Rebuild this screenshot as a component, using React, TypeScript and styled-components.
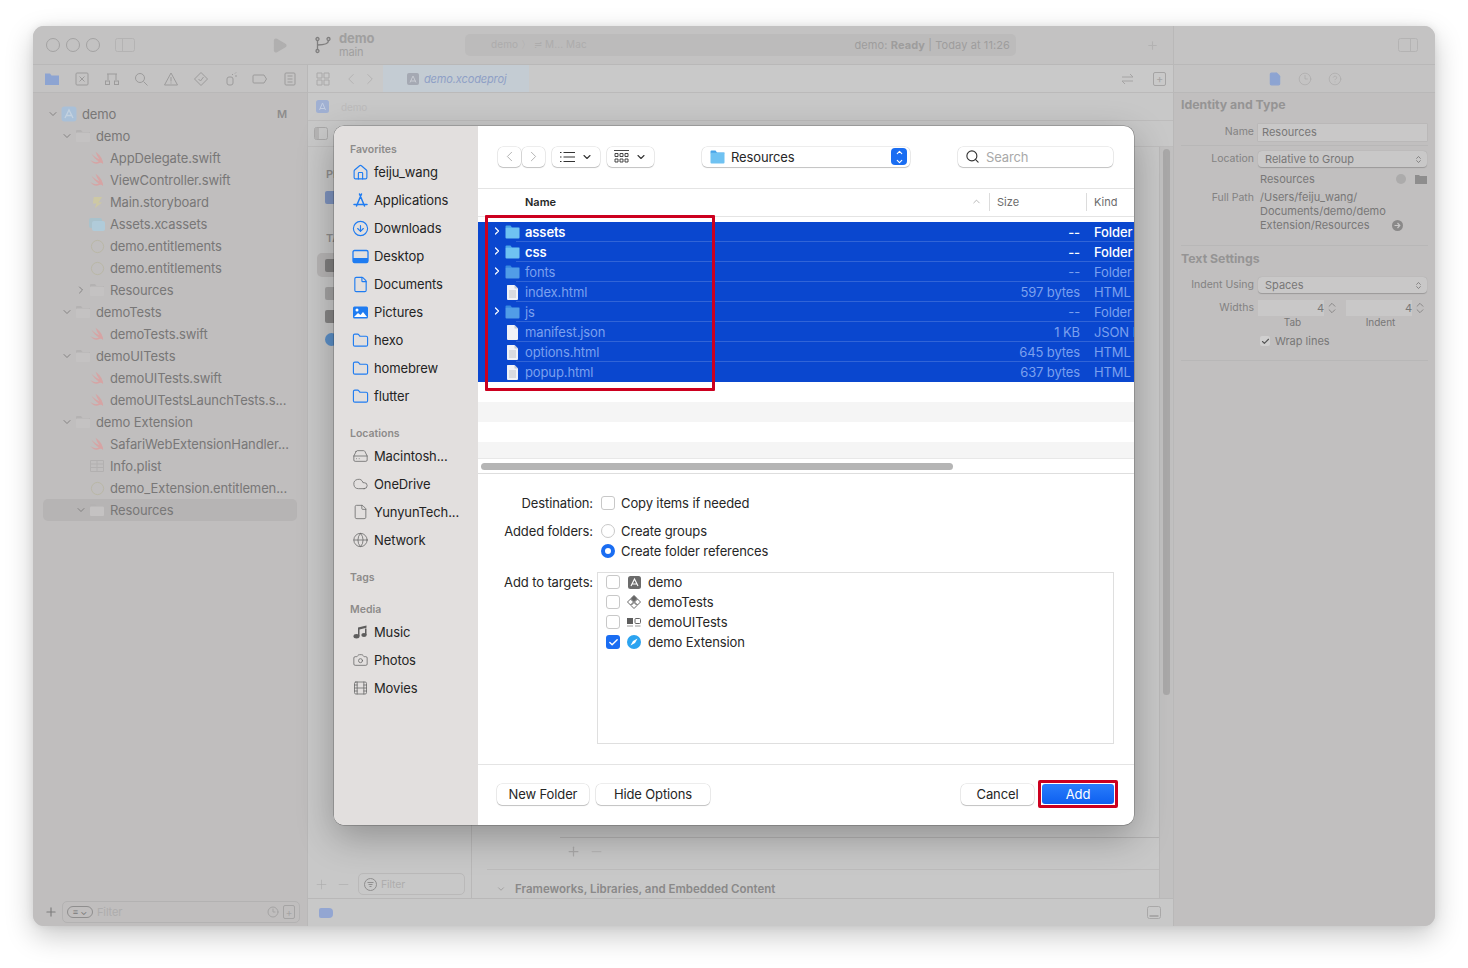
import React from "react";
import { createGlobalStyle, styled } from "styled-components";
import {
  Camera,
  Check,
  ChevronDown,
  ChevronLeft,
  ChevronRight,
  ChevronUp,
  ChevronsUpDown,
  CircleArrowDown,
  CircleHelp,
  Clock3,
  Cloud,
  File,
  Film,
  Folder,
  Globe,
  HardDrive,
  House,
  Minus,
  Play,
  Plus,
  Search,
} from "lucide-react";

const GlobalStyle = createGlobalStyle`
  html, body {
    margin: 0;
    background: #fff;
  }
  body {
    font-family: Inter, "Noto Sans", "Liberation Sans", sans-serif;
    font-size: 13px;
    letter-spacing: -0.12px;
    -webkit-font-smoothing: antialiased;
  }
  * {
    box-sizing: border-box;
  }
  svg {
    display: block;
    flex: none;
  }
`;

type TreeRow = {
  name: string;
  depth: number;
  arrow?: "open" | "closed";
  icon: "project" | "folder" | "swift" | "story" | "assets" | "plist" | "ent";
  selected?: boolean;
};

const tree: TreeRow[] = [
  { name: "demo", depth: 0, arrow: "open", icon: "project" },
  { name: "demo", depth: 1, arrow: "open", icon: "folder" },
  { name: "AppDelegate.swift", depth: 2, icon: "swift" },
  { name: "ViewController.swift", depth: 2, icon: "swift" },
  { name: "Main.storyboard", depth: 2, icon: "story" },
  { name: "Assets.xcassets", depth: 2, icon: "assets" },
  { name: "demo.entitlements", depth: 2, icon: "ent" },
  { name: "demo.entitlements", depth: 2, icon: "ent" },
  { name: "Resources", depth: 2, arrow: "closed", icon: "folder" },
  { name: "demoTests", depth: 1, arrow: "open", icon: "folder" },
  { name: "demoTests.swift", depth: 2, icon: "swift" },
  { name: "demoUITests", depth: 1, arrow: "open", icon: "folder" },
  { name: "demoUITests.swift", depth: 2, icon: "swift" },
  { name: "demoUITestsLaunchTests.s...", depth: 2, icon: "swift" },
  { name: "demo Extension", depth: 1, arrow: "open", icon: "folder" },
  { name: "SafariWebExtensionHandler...", depth: 2, icon: "swift" },
  { name: "Info.plist", depth: 2, icon: "plist" },
  { name: "demo_Extension.entitlemen...", depth: 2, icon: "ent" },
  { name: "Resources", depth: 2, arrow: "open", icon: "folder", selected: true },
];

const files = [
  { name: "assets", size: "--", kind: "Folder", folder: true, active: true },
  { name: "css", size: "--", kind: "Folder", folder: true, active: true },
  { name: "fonts", size: "--", kind: "Folder", folder: true },
  { name: "index.html", size: "597 bytes", kind: "HTML" },
  { name: "js", size: "--", kind: "Folder", folder: true },
  { name: "manifest.json", size: "1 KB", kind: "JSON File" },
  { name: "options.html", size: "645 bytes", kind: "HTML" },
  { name: "popup.html", size: "637 bytes", kind: "HTML" },
];

const SwiftIcon = ({ color = "#d6a4a4" }: { color?: string }) => (
  <svg width="17" height="17" viewBox="1 2 14 13">
    <path
      d="M2 9.500C4 11.500 7 12 9 11 7 9.500 4.500 7 3 4.500 5 6.500 8 8.500 9.500 9 8 7 7 5 6.500 3c2.500 2 5 4.500 5.500 7 .5 1 .8 2 .5 3-.8-1-1.800-1.200-3-.8C7 13.500 4 12.500 2 9.500Z"
      fill={color}
    />
  </svg>
);

const FolderFill = ({ color = "#c4c2c2", tab = "#b4b2b2" }: { color?: string; tab?: string }) => (
  <svg width="16" height="14" viewBox="0 0 16 14">
    <path d="M1 3V2a1 1 0 0 1 1-1h4l1.500 2H15v1H1Z" fill={tab} />
    <rect x="1" y="3.500" width="14" height="9.500" rx="1" fill={color} />
  </svg>
);

const TreeIcon = ({ kind }: { kind: TreeRow["icon"] }) => {
  switch (kind) {
    case "project":
      return (
        <svg width="16" height="16" viewBox="0 0 16 16">
          <rect x=".5" y=".5" width="15" height="15" rx="3" fill="#a9c0d8" />
          <path d="M4 12 8 4l4 8M5 9.500h6" stroke="#c4d2e0" strokeWidth="1.300" fill="none" />
        </svg>
      );
    case "folder":
      return <FolderFill />;
    case "swift":
      return <SwiftIcon />;
    case "story":
      return (
        <svg width="15" height="15" viewBox="0 0 16 16">
          <path d="M4 2h9L9 8h4L5 14l2-5H3l1-7Z" fill="#cdc8a4" />
        </svg>
      );
    case "assets":
      return (
        <svg width="18" height="15" viewBox="0 0 18 15">
          <rect x="1" y="1" width="13" height="10" rx="2" fill="#a9c2cc" />
          <rect x="4" y="4" width="13" height="10" rx="2" fill="#b0cbd9" />
        </svg>
      );
    case "plist":
      return (
        <svg width="16" height="14" viewBox="0 0 16 14">
          <path d="M1.500 1.500h13v11h-13ZM1.500 5h13M1.500 8.500h13M8 1.500v11" stroke="#b2b0b0" fill="none" />
        </svg>
      );
    default:
      return (
        <svg width="15" height="15" viewBox="0 0 16 16">
          <circle cx="8" cy="8" r="6.500" stroke="#b9b6a4" fill="none" />
        </svg>
      );
  }
};

const NavIcon = ({ index }: { index: number }) => {
  const s = { stroke: "#9c9b9b", fill: "none", strokeWidth: 1 };
  const shapes = [
    <path d="M1 2.500h5l1.500 2H15V14H1Z" fill="#8da4d2" />,
    <g {...s}><rect x="2" y="2" width="12" height="12" rx="1" /><path d="m5.500 5.500 5 5m0-5-5 5" /></g>,
    <g {...s}><path d="M3 3h10M4 3v6M12 3v6" /><rect x="1.500" y="10" width="4" height="3.500" /><rect x="10.500" y="10" width="4" height="3.500" /></g>,
    <g {...s}><circle cx="7" cy="7" r="4.500" /><path d="m10.500 10.500 4 4" /></g>,
    <g {...s}><path d="M8 2 14.500 14h-13Z" /><path d="M8 6v4.500M8 11.500v1" /></g>,
    <g {...s}><path d="M8 1.500 14.500 8 8 14.500 1.500 8Z" /><path d="m5.500 8 2 2 3-4" /></g>,
    <g {...s}><rect x="4" y="6" width="6" height="8" rx="2" /><path d="M9 3.500h1M12 2.500l1-1M12 5h2" /></g>,
    <g {...s}><path d="M2 4h10l2.500 4-2.500 4H2a1 1 0 0 1-1-1V5a1 1 0 0 1 1-1Z" /></g>,
    <g {...s}><rect x="3" y="2" width="10" height="12" rx="1" /><path d="M5.500 5h5M5.500 8h5M5.500 11h5" /></g>,
  ];
  return (
    <svg width="16" height="16" viewBox="0 0 16 16">
      {shapes[index]}
    </svg>
  );
};

const PanelIcon = ({ side }: { side: "left" | "right" }) => (
  <svg width="20" height="16" viewBox="0 0 20 16" fill="none" stroke="#b4b3b3">
    <rect x=".5" y="1.500" width="19" height="13" rx="2" />
    {side === "left" && <path d="M7.500 1.500v13" />}
    {side === "right" && <path d="M12.500 1.500v13" />}
  </svg>
);

const SmallPanel = ({ side }: { side: "left" | "bottom" }) => (
  <svg width="14" height="13" viewBox="0 0 14 13" stroke="#a9a8a8" fill="none">
    <rect x=".5" y=".5" width="13" height="12" rx="2" />
    {side === "left" && <path d="M1 1h4v11H1Z" fill="#b5b4b4" stroke="none" />}
    {side === "bottom" && <path d="M2.500 10h9" strokeWidth="2" />}
  </svg>
);

const ArrowDot = () => (
  <svg width="11" height="11" viewBox="0 0 11 11">
    <circle cx="5.500" cy="5.500" r="5.500" fill="#8a8989" />
    <path d="M2.500 5.500h5M5.500 3l2.300 2.500L5.500 8" stroke="#c9c8c8" strokeWidth="1.200" fill="none" />
  </svg>
);

const DesktopIcon = () => (
  <svg width="17" height="15" viewBox="0 0 17 15" fill="none">
    <rect x="1" y="1.500" width="15" height="12" rx="1.500" stroke="#1f7cf1" strokeWidth="1.300" />
    <rect x="1" y="9" width="15" height="4.500" fill="#1f7cf1" />
  </svg>
);

const PicturesIcon = () => (
  <svg width="17" height="15" viewBox="0 0 17 15">
    <rect x="1" y="1.500" width="15" height="12" rx="1.500" fill="#1f7cf1" />
    <circle cx="5" cy="5" r="1.500" fill="#fff" />
    <path d="m2 12 4-4 2.500 2 2.500-3 4 5Z" fill="#fff" />
  </svg>
);

const AppsIcon = () => (
  <svg width="17" height="16" viewBox="0 0 17 16" fill="none" stroke="#1f7cf1" strokeWidth="1.500" strokeLinecap="round">
    <path d="M2 12.500h13M9.500 2 4.500 14M7.500 2l5 12" />
  </svg>
);

const MusicIcon = () => (
  <svg width="16" height="16" viewBox="0 0 16 16">
    <path d="M5.500 3.500 14 1.500v2.300l-7 1.700V12h-1.500ZM12.500 4.500H14V11h-1.500Z" fill="#5e5d5d" />
    <ellipse cx="4" cy="12.300" rx="3" ry="2.200" fill="#5e5d5d" />
    <ellipse cx="11.500" cy="11" rx="2.700" ry="2" fill="#5e5d5d" />
  </svg>
);

const BlueFolder = ({ dim }: { dim?: boolean }) => (
  <svg width="15" height="14" viewBox="0 0 15 14" opacity={dim ? 0.7 : 1}>
    <path d="M.5 3V1.500a1 1 0 0 1 1-1h4l1.500 2h7.500v1H.5Z" fill="#4aa5e8" />
    <rect x=".5" y="2.800" width="14" height="10.700" rx="1" fill="#6fc2f2" />
  </svg>
);

const DocIcon = ({ lined }: { lined?: boolean }) => (
  <svg width="13" height="15" viewBox="0 0 13 15">
    <path d="M1.500 0h7L12 3.500V14a1 1 0 0 1-1 1H2a1 1 0 0 1-1-1V.5a.5.5 0 0 1 .5-.5Z" fill="#f0f2f7" />
    <path d="M8.500 0v3.500H12Z" fill="#c3c9d8" />
    {lined && <path d="M3 6h7M3 8h7M3 10h7M3 12h7" stroke="#c2c4ca" strokeWidth="1.100" />}
  </svg>
);

const sideBlue = { size: 17, color: "#1f7cf1", strokeWidth: 1.600 };
const sideGray = { size: 16, color: "#6a6969", strokeWidth: 1.200 };

const Sidebar: React.FC = () => (
  <DialogSide>
    <SideHead>Favorites</SideHead>
    <SideItem><House {...sideBlue} /><span>feiju_wang</span></SideItem>
    <SideItem><AppsIcon /><span>Applications</span></SideItem>
    <SideItem><CircleArrowDown {...sideBlue} /><span>Downloads</span></SideItem>
    <SideItem><DesktopIcon /><span>Desktop</span></SideItem>
    <SideItem><File {...sideBlue} /><span>Documents</span></SideItem>
    <SideItem><PicturesIcon /><span>Pictures</span></SideItem>
    <SideItem><Folder {...sideBlue} /><span>hexo</span></SideItem>
    <SideItem><Folder {...sideBlue} /><span>homebrew</span></SideItem>
    <SideItem><Folder {...sideBlue} /><span>flutter</span></SideItem>
    <SideHead $gap={17}>Locations</SideHead>
    <SideItem><HardDrive {...sideGray} /><span>Macintosh...</span></SideItem>
    <SideItem><Cloud {...sideGray} /><span>OneDrive</span></SideItem>
    <SideItem><File {...sideGray} /><span>YunyunTech...</span></SideItem>
    <SideItem><Globe {...sideGray} /><span>Network</span></SideItem>
    <SideHead $gap={17}>Tags</SideHead>
    <SideHead $gap={18}>Media</SideHead>
    <SideItem><MusicIcon /><span>Music</span></SideItem>
    <SideItem><Camera {...sideGray} /><span>Photos</span></SideItem>
    <SideItem><Film {...sideGray} /><span>Movies</span></SideItem>
  </DialogSide>
);

const OpenDialog: React.FC = () => (
  <Dialog>
    <Sidebar />
    <DialogMain>
      <Toolbar>
        <NavPair>
          <NavButton><ChevronLeft size={17} color="#a8a8a8" strokeWidth={1.200} /></NavButton>
          <NavButton><ChevronRight size={17} color="#a8a8a8" strokeWidth={1.200} /></NavButton>
        </NavPair>
        <ViewButton $width={48}>
          <svg width="15" height="12" viewBox="0 0 15 12" stroke="#333" strokeWidth="1.100">
            <path d="M3.500 1.500H15M3.500 6H15M3.500 10.500H15M0 1.500h1.500M0 6h1.500M0 10.500h1.500" />
          </svg>
          <ChevronDown size={12} color="#333" strokeWidth={2.200} />
        </ViewButton>
        <ViewButton $width={47}>
          <svg width="15" height="14" viewBox="0 0 15 14" fill="none" stroke="#333" strokeWidth=".9">
            <path d="M0 .5h15" />
            <path d="M1 3.500h3v3H1ZM6 3.500h3v3H6ZM11 3.500h3v3h-3ZM1 9h3v3H1ZM6 9h3v3H6ZM11 9h3v3h-3Z" />
          </svg>
          <ChevronDown size={12} color="#333" strokeWidth={2.200} />
        </ViewButton>
        <PathPopup>
          <BlueFolder />
          <PopupLabel>Resources</PopupLabel>
          <PopupStepper>
            <ChevronUp size={9} color="#fff" strokeWidth={3} />
            <ChevronDown size={9} color="#fff" strokeWidth={3} />
          </PopupStepper>
        </PathPopup>
        <SearchBox>
          <Search size={15} color="#333" strokeWidth={1.800} />
          <span>Search</span>
        </SearchBox>
      </Toolbar>

      <ColumnHeader>
        <NameHead>Name</NameHead>
        <ChevronUp size={11} color="#999" strokeWidth={1.500} />
        <SizeHead>Size</SizeHead>
        <KindHead>Kind</KindHead>
      </ColumnHeader>

      <FileList>
        {files.map((f) => (
          <FileRow key={f.name} $active={f.active}>
            <Caret>
              {f.folder && <ChevronRight size={12} color="#fff" strokeWidth={2.400} />}
            </Caret>
            <FileIcon>
              {f.folder ? <BlueFolder dim={!f.active} /> : <DocIcon lined={f.kind === "HTML"} />}
            </FileIcon>
            <FileName $active={f.active}>{f.name}</FileName>
            <FileSize>{f.size}</FileSize>
            <FileKind>{f.kind}</FileKind>
          </FileRow>
        ))}
      </FileList>
      <Stripe />
      <Stripe $gray />
      <Stripe />
      <Stripe $gray $height={16} />
      <HScroll>
        <HThumb />
      </HScroll>

      <Options>
        <OptionRow>
          <OptionLabel>Destination:</OptionLabel>
          <OptionValue><CheckBox /><span>Copy items if needed</span></OptionValue>
        </OptionRow>
        <OptionRow $gap={8}>
          <OptionLabel>Added folders:</OptionLabel>
          <OptionValue><Radio /><span>Create groups</span></OptionValue>
          <OptionValue><Radio $on /><span>Create folder references</span></OptionValue>
        </OptionRow>
        <OptionRow $gap={11}>
          <OptionLabel>Add to targets:</OptionLabel>
          <TargetBox>
            <TargetRow>
              <CheckBox />
              <TargetIcon>
                <svg width="13" height="13" viewBox="0 0 13 13">
                  <rect width="13" height="13" rx="2.500" fill="#6b6b6b" />
                  <path d="M3 10 6.500 3 10 10M3.500 8h6" stroke="#fff" strokeWidth="1.100" fill="none" />
                </svg>
              </TargetIcon>
              <span>demo</span>
            </TargetRow>
            <TargetRow>
              <CheckBox />
              <TargetIcon>
                <svg width="14" height="14" viewBox="0 0 14 14" fill="none" stroke="#666">
                  <path d="M7 .5 10 3.500 7 6.500 4 3.500Z" fill="#666" />
                  <path d="M3.500 4 .5 7l3 3 3-3ZM10.500 4l3 3-3 3-3-3ZM7 7.500l3 3-3 3-3-3Z" />
                </svg>
              </TargetIcon>
              <span>demoTests</span>
            </TargetRow>
            <TargetRow>
              <CheckBox />
              <TargetIcon>
                <svg width="14" height="12" viewBox="0 0 14 12">
                  <rect y="2" width="6" height="6" fill="#5d5d5d" />
                  <rect x="8" y="2.500" width="5.500" height="5" rx="1" fill="none" stroke="#666" />
                  <path d="M0 10h6M8 10h5.500" stroke="#999" />
                </svg>
              </TargetIcon>
              <span>demoUITests</span>
            </TargetRow>
            <TargetRow>
              <CheckBox $on><Check size={11} color="#fff" strokeWidth={3} /></CheckBox>
              <TargetIcon>
                <svg width="14" height="14" viewBox="0 0 14 14">
                  <circle cx="7" cy="7" r="7" fill="#2ba3f0" />
                  <path d="M10.500 3.500 8 8 3.500 10.500 6 6Z" fill="#fff" />
                </svg>
              </TargetIcon>
              <span>demo Extension</span>
            </TargetRow>
          </TargetBox>
        </OptionRow>
      </Options>

      <Footer>
        <PushButton $width={92}>New Folder</PushButton>
        <PushButton $width={114}>Hide Options</PushButton>
        <FooterSpacer />
        <PushButton $width={73}>Cancel</PushButton>
        <AddFrame>
          <AddButton>Add</AddButton>
        </AddFrame>
      </Footer>
      <RedBox />
    </DialogMain>
  </Dialog>
);

export default function App() {
  return (
    <Page>
      <GlobalStyle />
      <Window>
        <TopBar>
          <Lights>
            <Light />
            <Light />
            <Light />
          </Lights>
          <PanelIcon side="left" />
          <RunButton><Play size={17} color="#b0afaf" fill="#b0afaf" /></RunButton>
          <BranchMark>
            <svg width="16" height="18" viewBox="0 0 16 18" fill="none" stroke="#7f7e7e" strokeWidth="1.300">
              <circle cx="2.500" cy="3" r="1.500" />
              <circle cx="2.500" cy="15" r="1.500" />
              <circle cx="13.500" cy="3" r="1.500" />
              <path d="M2.500 4.500v9M13.500 4.500c0 3-4 4.500-11 4.500" />
            </svg>
          </BranchMark>
          <Scheme>
            <SchemeName>demo</SchemeName>
            <SchemeBranch>main</SchemeBranch>
          </Scheme>
          <Activity>
            <ActivityCrumbs>demo 〉 ≓ M... Mac</ActivityCrumbs>
            <ActivityStatus>demo: <b>Ready</b> | Today at 11:26</ActivityStatus>
          </Activity>
          <AddTab><Plus size={13} color="#b3b2b2" /></AddTab>
        </TopBar>
        <InspectorTop>
          <PanelIcon side="right" />
        </InspectorTop>

        <Navigator>
          <NavTabs>
            {Array.from({ length: 9 }).map((_, i) => (
              <NavIcon key={i} index={i} />
            ))}
          </NavTabs>
          <Tree>
            {tree.map((r, i) => (
              <TreeItem key={i} $depth={r.depth} $selected={r.selected}>
                <TreeArrow>
                  {r.arrow === "open" && <ChevronDown size={12} color="#7d7c7c" strokeWidth={1.800} />}
                  {r.arrow === "closed" && <ChevronRight size={12} color="#7d7c7c" strokeWidth={1.800} />}
                </TreeArrow>
                <TreeIconSlot><TreeIcon kind={r.icon} /></TreeIconSlot>
                <span>{r.name}</span>
                {i === 0 && <TreeBadge>M</TreeBadge>}
              </TreeItem>
            ))}
          </Tree>
          <NavFilter>
            <Plus size={14} color="#7d7c7c" />
            <FilterField>
              <FilterPill>≡ ⌄</FilterPill>
              <span>Filter</span>
              <FilterClock><Clock3 size={12} color="#a5a4a4" /></FilterClock>
              <FilterSquare>+</FilterSquare>
            </FilterField>
          </NavFilter>
        </Navigator>

        <Editor>
          <TabStrip>
            <TabTools>
              <svg width="14" height="14" viewBox="0 0 14 14" fill="none" stroke="#a9a8a8">
                <path d="M1 1h5v5H1ZM8 1h5v5H8ZM1 8h5v5H1ZM8 8h5v5H8Z" />
              </svg>
              <ToolChevrons>
                <ChevronLeft size={18} color="#b3b2b2" strokeWidth={1.300} />
                <ChevronRight size={18} color="#b3b2b2" strokeWidth={1.300} />
              </ToolChevrons>
            </TabTools>
            <ActiveTab>
              <svg width="12" height="12" viewBox="0 0 12 12">
                <rect width="12" height="12" rx="2" fill="#a5a9b3" />
                <path d="M3 9.500 6 3l3 6.500M3.500 8h5" stroke="#c8cbd2" fill="none" />
              </svg>
              demo.xcodeproj
            </ActiveTab>
            <TabRight>
              <svg width="13" height="12" viewBox="0 0 13 12" fill="none" stroke="#a5a4a4">
                <path d="M1 4h11L9 1M12 8H1l3 3" />
              </svg>
              <PanelPlus>+</PanelPlus>
            </TabRight>
          </TabStrip>
          <Crumbs>
            <svg width="13" height="13" viewBox="0 0 13 13">
              <rect width="13" height="13" rx="2.500" fill="#a0b0d2" />
              <path d="M3.500 10 6.500 3l3 7M4 8.500h5" stroke="#c2cde2" fill="none" />
            </svg>
            <span>demo</span>
          </Crumbs>
          <SubBar>
            <SmallPanel side="left" />
          </SubBar>
          <EditorBody>
            <TargetsPane>
              <PaneHead>PROJECT</PaneHead>
              <PaneIcon $color="#7d92bd" />
              <PaneHead $top={27}>TARGETS</PaneHead>
              <PaneSelected>
                <PaneIcon $color="#7f7e7e" $flat />
              </PaneSelected>
              <PaneIcon $color="#a3a2a2" />
              <PaneIcon $color="#868585" />
              <PaneIcon $color="#5b8fc7" $round />
              <PaneFilter>
                <Plus size={15} color="#acabab" strokeWidth={1} />
                <Minus size={15} color="#acabab" strokeWidth={1} />
                <PaneFilterField>
                  <svg width="13" height="13" viewBox="0 0 13 13" fill="none" stroke="#8f8e8e">
                    <circle cx="6.500" cy="6.500" r="6" />
                    <path d="M3.500 4.500h6M4.500 6.500h4M5.500 8.500h2" />
                  </svg>
                  Filter
                </PaneFilterField>
              </PaneFilter>
            </TargetsPane>
            <SettingsPane>
              <TableTail>
                <Plus size={15} color="#aaa9a9" />
                <Minus size={15} color="#b8b7b7" />
              </TableTail>
              <FrameworkRow>
                <ChevronDown size={10} color="#9b9a9a" />
                <span>Frameworks, Libraries, and Embedded Content</span>
              </FrameworkRow>
            </SettingsPane>
            <ScrollRail>
              <RailThumb />
            </ScrollRail>
          </EditorBody>
          <StatusBar>
            <StatusTag />
            <SmallPanel side="bottom" />
          </StatusBar>
        </Editor>

        <Inspector>
          <InspectorTabs>
            <File size={14} color="#8da4d2" fill="#8da4d2" />
            <Clock3 size={14} color="#a7a6a6" strokeWidth={1} />
            <CircleHelp size={14} color="#a7a6a6" strokeWidth={1} />
          </InspectorTabs>
          <SectionTitle>Identity and Type</SectionTitle>
          <FormRow $top={11} $rule $pad={4}>
            <FormLabel>Name</FormLabel>
            <NameField>Resources</NameField>
          </FormRow>
          <FormRow $top={5}>
            <FormLabel>Location</FormLabel>
            <SelectField>Relative to Group<ChevronsUpDown size={9} color="#6f6e6e" strokeWidth={2} /></SelectField>
          </FormRow>
          <FormRow $pad={4}>
            <span />
            <PathLine $actions>
              Resources
              <PathActions>
                <RoundDot />
                <svg width="12" height="10" viewBox="0 0 12 10"><path d="M0 1h4l1 1h7v8H0Z" fill="#8e8d8d" /></svg>
              </PathActions>
            </PathLine>
          </FormRow>
          <FormRow $rule $pad={13}>
            <FormLabel>Full Path</FormLabel>
            <PathLine>
              /Users/feiju_wang/<br />
              Documents/demo/demo<br />
              <ArrowLine>Extension/Resources<ArrowDot /></ArrowLine>
            </PathLine>
          </FormRow>
          <SectionTitle $top={5}>Text Settings</SectionTitle>
          <FormRow $top={10}>
            <FormLabel>Indent Using</FormLabel>
            <SelectField>Spaces<ChevronsUpDown size={9} color="#6f6e6e" strokeWidth={2} /></SelectField>
          </FormRow>
          <FormRow $top={2}>
            <FormLabel>Widths</FormLabel>
            <Steppers>
              <StepCell>
                <StepField>4</StepField>
                <ChevronsUpDown size={14} color="#727171" strokeWidth={1.200} />
                <StepCaption>Tab</StepCaption>
              </StepCell>
              <StepCell>
                <StepField>4</StepField>
                <ChevronsUpDown size={14} color="#727171" strokeWidth={1.200} />
                <StepCaption>Indent</StepCaption>
              </StepCell>
            </Steppers>
          </FormRow>
          <FormRow $rule $pad={12}>
            <span />
            <WrapLine>
              <WrapBox><Check size={9} color="#555" strokeWidth={3} /></WrapBox>
              Wrap lines
            </WrapLine>
          </FormRow>
        </Inspector>

        <OpenDialog />
      </Window>
    </Page>
  );
}

const Page = styled.div`
  width: 1468px;
  height: 968px;
  padding: 26px 33px 42px;
  overflow: hidden;
  background: #fff;
`;

const Window = styled.div`
  position: relative;
  width: 1402px;
  height: 900px;
  display: grid;
  grid-template-columns: 274px 866px 262px;
  grid-template-rows: 39px 1fr;
  border-radius: 11px;
  background: #c6c5c5;
  box-shadow: 0 10px 28px rgba(0, 0, 0, 0.22), 0 0 8px rgba(0, 0, 0, 0.08);
`;

const TopBar = styled.div`
  grid-column: 1 / 3;
  display: flex;
  align-items: center;
  padding-left: 13px;
  background: #c3c2c2;
  border-top-left-radius: 11px;
  border-bottom: 1px solid #b9b8b8;
`;

const Lights = styled.div`
  display: flex;
  gap: 6px;
  margin-right: 15px;
`;

const Light = styled.span`
  width: 14px;
  height: 14px;
  border-radius: 50%;
  border: 1px solid #a3a2a2;
`;

const RunButton = styled.span`
  margin-left: 136px;
`;

const BranchMark = styled.span`
  margin-left: 27px;
`;

const AddTab = styled.span`
  margin-left: 130px;
`;

const Scheme = styled.div`
  margin-left: 8px;
  width: 126px;
  color: #a09f9f;
`;

const SchemeName = styled.div`
  font-size: 13px;
  font-weight: 700;
  line-height: 15px;
`;

const SchemeBranch = styled.div`
  font-size: 11px;
  line-height: 13px;
`;

const Activity = styled.div`
  width: 551px;
  height: 22px;
  display: flex;
  align-items: center;
  justify-content: space-between;
  padding: 0 6px 0 26px;
  border-radius: 5px;
  background: #bcbbbb;
  font-size: 11px;
  letter-spacing: 0.1px;
  color: #a5a4a4;
`;

const ActivityCrumbs = styled.span`
  font-size: 10px;
  color: #adacac;
`;

const ActivityStatus = styled.span`
  color: #9e9d9d;
`;

const InspectorTop = styled.div`
  display: flex;
  align-items: center;
  justify-content: flex-end;
  padding-right: 17px;
  background: #c4c3c3;
  border-top-right-radius: 11px;
  border-left: 1px solid #b9b8b8;
  border-bottom: 1px solid #b9b8b8;
`;

const Navigator = styled.div`
  display: flex;
  flex-direction: column;
  min-height: 0;
  background: #c0bebe;
  border-bottom-left-radius: 11px;
`;

const NavTabs = styled.div`
  height: 28px;
  display: flex;
  align-items: center;
  justify-content: space-between;
  padding: 0 9px 0 11px;
  background: #c4c3c3;
  border-bottom: 1px solid #b9b8b8;
`;

const Tree = styled.div`
  flex: 1;
  padding-top: 10px;
  color: #787777;
`;

const TreeItem = styled.div<{ $depth: number; $selected?: boolean }>`
  height: 22px;
  margin: 0 10px;
  padding-left: ${(p) => 4 + p.$depth * 14}px;
  display: flex;
  align-items: center;
  border-radius: 5px;
  white-space: nowrap;
  background: ${(p) => (p.$selected ? "#b6b4b4" : "transparent")};
`;

const TreeArrow = styled.span`
  width: 12px;
  flex: none;
`;

const TreeIconSlot = styled.span`
  width: 16px;
  margin: 0 5px 0 2px;
  display: flex;
  justify-content: center;
  flex: none;
`;

const TreeBadge = styled.span`
  margin-left: auto;
  margin-right: 10px;
  font-size: 11px;
  font-weight: 600;
  color: #8d8c8c;
`;

const NavFilter = styled.div`
  height: 28px;
  display: flex;
  align-items: center;
  gap: 4px;
  padding: 0 7px 0 11px;
`;

const FilterField = styled.div`
  flex: 1;
  height: 22px;
  display: flex;
  align-items: center;
  gap: 4px;
  padding: 0 4px;
  border: 1px solid #b3b2b2;
  border-radius: 5px;
  font-size: 11px;
  color: #aeadad;
`;

const FilterClock = styled.span`
  margin-left: auto;
`;

const FilterPill = styled.span`
  width: 26px;
  height: 12px;
  border: 1px solid #8f8e8e;
  border-radius: 6px;
  font-size: 9px;
  line-height: 10px;
  text-align: center;
  color: #777;
`;

const FilterSquare = styled.span`
  width: 12px;
  height: 14px;
  border: 1px solid #a5a4a4;
  border-radius: 2px;
  font-size: 10px;
  line-height: 12px;
  text-align: center;
  color: #a5a4a4;
`;

const Editor = styled.div`
  display: flex;
  flex-direction: column;
  min-height: 0;
  background: #c8c8c8;
  border-left: 1px solid #b9b8b8;
`;

const TabStrip = styled.div`
  height: 28px;
  flex: none;
  display: flex;
  align-items: center;
  border-bottom: 1px solid #bbbaba;
  background: #c9c9c9;
`;

const TabTools = styled.div`
  width: 75px;
  display: flex;
  align-items: center;
  padding-left: 8px;
`;

const ToolChevrons = styled.span`
  display: flex;
  gap: 1px;
  margin-left: 12px;
`;

const ActiveTab = styled.div`
  width: 146px;
  height: 27px;
  display: flex;
  align-items: center;
  gap: 5px;
  padding-left: 24px;
  background: #c4ccd3;
  font-size: 11px;
  font-style: italic;
  color: #8fa0c6;
`;

const TabRight = styled.div`
  margin-left: auto;
  display: flex;
  align-items: center;
  gap: 19px;
  padding-right: 7px;
`;

const PanelPlus = styled.span`
  width: 13px;
  height: 14px;
  border: 1px solid #a5a4a4;
  border-radius: 2px;
  font-size: 11px;
  line-height: 12px;
  text-align: center;
  color: #a5a4a4;
`;

const Crumbs = styled.div`
  height: 28px;
  flex: none;
  display: flex;
  align-items: center;
  gap: 12px;
  padding-left: 8px;
  border-bottom: 1px solid #bdbcbc;
  font-size: 10px;
  color: #bcbbbb;
`;

const SubBar = styled.div`
  height: 26px;
  flex: none;
  display: flex;
  align-items: center;
  padding-left: 6px;
  border-bottom: 1px solid #bdbcbc;
`;

const EditorBody = styled.div`
  flex: 1;
  min-height: 0;
  display: flex;
`;

const TargetsPane = styled.div`
  width: 164px;
  flex: none;
  display: flex;
  flex-direction: column;
  padding-top: 20px;
  border-right: 1px solid #b9b8b8;
`;

const PaneHead = styled.div<{ $top?: number }>`
  margin: ${(p) => p.$top ?? 0}px 0 0 18px;
  font-size: 11px;
  font-weight: 600;
  color: #8e8d8d;
`;

const PaneIcon = styled.div<{ $color: string; $round?: boolean; $flat?: boolean }>`
  width: 13px;
  height: 13px;
  margin: ${(p) => (p.$flat ? "0" : "10px 0 0 17px")};
  border-radius: ${(p) => (p.$round ? "50%" : "2px")};
  background: ${(p) => p.$color};
`;

const PaneSelected = styled.div`
  width: 150px;
  height: 24px;
  margin: 8px 0 0 9px;
  padding-left: 8px;
  display: flex;
  align-items: center;
  border-radius: 5px;
  background: #b6b4b4;
`;

const PaneFilter = styled.div`
  margin-top: auto;
  height: 30px;
  margin-bottom: -1px;
  display: flex;
  align-items: center;
  gap: 7px;
  padding: 0 6px;
`;

const PaneFilterField = styled.div`
  flex: 1;
  height: 22px;
  display: flex;
  align-items: center;
  gap: 4px;
  padding-left: 5px;
  border: 1px solid #bab9b9;
  border-radius: 5px;
  font-size: 10.500px;
  color: #aeadad;
`;

const SettingsPane = styled.div`
  flex: 1;
  display: flex;
  flex-direction: column;
  justify-content: flex-end;
`;

const TableTail = styled.div`
  height: 32px;
  margin-left: 88px;
  padding-left: 6px;
  padding-bottom: 4px;
  display: flex;
  align-items: center;
  gap: 8px;
  border-top: 1px solid #b3b2b2;
`;

const FrameworkRow = styled.div`
  height: 29px;
  margin-left: 15px;
  padding: 10px 0 0 9px;
  display: flex;
  align-items: center;
  gap: 9px;
  border-top: 1px solid #bdbcbc;
  font-size: 11.500px;
  font-weight: 600;
  letter-spacing: 0;
  color: #8a8989;
`;

const ScrollRail = styled.div`
  width: 14px;
  flex: none;
  padding: 2px 3px 0;
  background: #c1c0c0;
  border-left: 1px solid #b9b8b8;
`;

const RailThumb = styled.div`
  height: 546px;
  border-radius: 4px;
  background: #a9a8a8;
`;

const StatusBar = styled.div`
  height: 28px;
  flex: none;
  display: flex;
  align-items: center;
  justify-content: space-between;
  padding: 0 12px 0 11px;
  border-top: 1px solid #b9b8b8;
`;

const StatusTag = styled.div`
  width: 14px;
  height: 10px;
  border-radius: 2px 4px 4px 2px;
  background: #93a6d2;
`;

const Inspector = styled.div`
  background: #c1bfbf;
  border-left: 1px solid #b9b8b8;
  border-bottom-right-radius: 11px;
  padding: 0 7px;
  font-size: 11px;
  letter-spacing: 0;
  color: #787777;
`;

const InspectorTabs = styled.div`
  height: 28px;
  margin: 0 -7px;
  display: flex;
  align-items: center;
  justify-content: center;
  gap: 16px;
  background: #c4c3c3;
  border-bottom: 1px solid #b9b8b8;
`;

const SectionTitle = styled.div<{ $top?: number }>`
  margin-top: ${(p) => p.$top ?? 4}px;
  height: 16px;
  font-size: 12.300px;
  font-weight: 700;
  line-height: 16px;
  color: #959494;
`;

const FormRow = styled.div<{ $top?: number; $rule?: boolean; $pad?: number }>`
  margin-top: ${(p) => p.$top ?? 0}px;
  padding-bottom: ${(p) => p.$pad ?? 5}px;
  display: grid;
  grid-template-columns: 73px 169px;
  column-gap: 4px;
  align-items: start;
  border-bottom: ${(p) => (p.$rule ? "1px solid #b8b7b7" : "0 none")};
`;

const FormLabel = styled.span`
  font-size: 10.500px;
  line-height: 15px;
  text-align: right;
  color: #838282;
`;

const NameField = styled.div`
  height: 17px;
  padding-left: 4px;
  line-height: 16px;
  background: #c9c8c8;
  box-shadow: 0 0 0 0.5px #b3b2b2;
`;

const SelectField = styled.div`
  height: 16px;
  display: flex;
  align-items: center;
  justify-content: space-between;
  padding: 0 4px 0 7px;
  border-radius: 4px;
  background: #c9c8c8;
  box-shadow: 0 0.5px 1px rgba(0, 0, 0, 0.2);
`;

const PathLine = styled.div<{ $actions?: boolean }>`
  display: ${(p) => (p.$actions ? "flex" : "block")};
  justify-content: space-between;
  align-items: center;
  padding-left: 2px;
  line-height: 14px;
`;

const ArrowLine = styled.span`
  display: inline-flex;
  align-items: center;
  gap: 23px;
`;

const PathActions = styled.span`
  display: flex;
  align-items: center;
  gap: 9px;
`;

const RoundDot = styled.span`
  width: 10px;
  height: 10px;
  border-radius: 50%;
  background: #acabab;
`;

const Steppers = styled.div`
  display: grid;
  grid-template-columns: 80px 80px;
  column-gap: 8px;
`;

const StepCell = styled.div`
  display: grid;
  grid-template-columns: 66px 14px;
  column-gap: 1px;
  align-items: center;
`;

const StepField = styled.div`
  height: 16px;
  text-align: right;
  line-height: 16px;
  background: #c9c8c8;
`;

const StepCaption = styled.div`
  grid-column: 1 / 3;
  padding-right: 12px;
  text-align: center;
  font-size: 10px;
  line-height: 13px;
`;

const WrapLine = styled.div`
  display: flex;
  align-items: center;
  gap: 5px;
  padding-left: 2px;
  line-height: 14px;
`;

const WrapBox = styled.span`
  width: 10px;
  height: 10px;
  display: flex;
  align-items: center;
  justify-content: center;
  border-radius: 2px;
  background: #d0cfcf;
`;

const Dialog = styled.div`
  position: absolute;
  left: 301px;
  top: 100px;
  width: 800px;
  height: 699px;
  display: flex;
  border-radius: 10px;
  overflow: hidden;
  background: #fff;
  box-shadow: 0 0 0 0.5px rgba(0, 0, 0, 0.35), 0 12px 36px rgba(0, 0, 0, 0.28);
`;

const DialogSide = styled.div`
  width: 144px;
  flex: none;
  padding-top: 17px;
  background: #e2dfde;
  color: #242424;
`;

const SideHead = styled.div<{ $gap?: number }>`
  height: 14px;
  margin: ${(p) => p.$gap ?? 0}px 0 1px 16px;
  font-size: 10.500px;
  font-weight: 600;
  line-height: 14px;
  letter-spacing: 0;
  color: #8d8b8a;
`;

const SideItem = styled.div`
  height: 28px;
  display: flex;
  align-items: center;
  padding-left: 18px;
  white-space: nowrap;

  svg {
    width: 17px;
  }
  span {
    margin-left: 5px;
  }
`;

const DialogMain = styled.div`
  position: relative;
  flex: 1;
  min-width: 0;
  display: flex;
  flex-direction: column;
  color: #262626;
`;

const Toolbar = styled.div`
  height: 62px;
  flex: none;
  display: flex;
  align-items: center;
  padding-left: 20px;
  padding-bottom: 1px;
`;

const raised = `
  background: #fff;
  border-radius: 5px;
  box-shadow: 0 0 0 0.5px rgba(0, 0, 0, 0.14), 0 1px 1px rgba(0, 0, 0, 0.18);
`;

const NavPair = styled.div`
  display: flex;
  gap: 1px;
`;

const NavButton = styled.div`
  ${raised}
  width: 23px;
  height: 20px;
  display: flex;
  align-items: center;
  justify-content: center;
`;

const ViewButton = styled.div<{ $width: number }>`
  ${raised}
  width: ${(p) => p.$width}px;
  height: 20px;
  margin-left: 7px;
  display: flex;
  align-items: center;
  justify-content: center;
  gap: 6px;
`;

const PathPopup = styled.div`
  ${raised}
  width: 208px;
  height: 20px;
  margin-left: 48px;
  display: flex;
  align-items: center;
  padding: 0 3px 0 8px;
`;

const PopupLabel = styled.span`
  margin-left: 6px;
`;

const PopupStepper = styled.span`
  width: 16px;
  height: 17px;
  margin-left: auto;
  display: flex;
  flex-direction: column;
  align-items: center;
  justify-content: center;
  border-radius: 4px;
  background: #1a6df2;
`;

const SearchBox = styled.div`
  ${raised}
  width: 155px;
  height: 20px;
  margin-left: 48px;
  display: flex;
  align-items: center;
  gap: 6px;
  padding-left: 7px;
  color: #a9a9a9;
`;

const ColumnHeader = styled.div`
  height: 29px;
  flex: none;
  display: flex;
  align-items: center;
  padding: 0 0 2px 47px;
  border-top: 1px solid #e4e4e4;
  border-bottom: 1px solid #e4e4e4;
  font-size: 11px;
  letter-spacing: 0;
  color: #6c6c6c;

  > svg {
    margin-left: 396px;
  }
`;

const NameHead = styled.span`
  width: 50px;
  font-weight: 600;
  color: #262626;
  flex: none;
`;

const SizeHead = styled.span`
  width: 97px;
  flex: none;
  margin-left: 7px;
  padding-left: 7px;
  border-left: 1px solid #dcdcdc;
  line-height: 18px;
`;

const KindHead = styled.span`
  padding-left: 7px;
  border-left: 1px solid #dcdcdc;
  line-height: 18px;
`;

const FileList = styled.div`
  margin-top: 5px;
  flex: none;
  background: #0a47cf;
`;

const FileRow = styled.div<{ $active?: boolean }>`
  height: 20px;
  display: flex;
  align-items: center;
  padding-left: 13px;
  overflow: hidden;
  white-space: nowrap;
  background: linear-gradient(rgba(255, 255, 255, 0.16), rgba(255, 255, 255, 0.16)) right bottom / calc(100% - 38px) 1px no-repeat;
  color: ${(p) => (p.$active ? "#fff" : "#7ba0ee")};
  font-weight: ${(p) => (p.$active ? 500 : 400)};

  &:last-child {
    background: none;
  }
`;

const Caret = styled.span`
  width: 12px;
  flex: none;
  margin-top: -2px;
`;

const FileIcon = styled.span`
  width: 15px;
  margin-left: 2px;
  flex: none;
  display: flex;
  justify-content: center;
`;

const FileName = styled.span<{ $active?: boolean }>`
  margin-left: 5px;
  font-weight: ${(p) => (p.$active ? 600 : 400)};
`;

const FileSize = styled.span`
  margin-left: auto;
`;

const FileKind = styled.span`
  width: 40px;
  margin-left: 14px;
  flex: none;
  overflow: hidden;
`;

const Stripe = styled.div<{ $gray?: boolean; $height?: number }>`
  height: ${(p) => p.$height ?? 20}px;
  flex: none;
  background: ${(p) => (p.$gray ? "#f5f5f5" : "#fff")};
`;

const HScroll = styled.div`
  height: 16px;
  flex: none;
  padding: 4px 181px 3px 3px;
  border-top: 1px solid #e8e8e8;
  border-bottom: 1px solid #dedede;
`;

const HThumb = styled.div`
  height: 7px;
  border-radius: 4px;
  background: #b5b5b5;
`;

const Options = styled.div`
  height: 291px;
  flex: none;
  padding-top: 19px;
  border-bottom: 1px solid #e4e4e4;
`;

const OptionRow = styled.div<{ $gap?: number }>`
  margin-top: ${(p) => p.$gap ?? 0}px;
  display: grid;
  grid-template-columns: 115px 1fr;
  column-gap: 8px;
`;

const OptionLabel = styled.div`
  line-height: 20px;
  text-align: right;
`;

const OptionValue = styled.div`
  grid-column: 2;
  height: 20px;
  display: flex;
  align-items: center;
  gap: 6px;
  white-space: nowrap;
`;

const CheckBox = styled.span<{ $on?: boolean }>`
  width: 14px;
  height: 14px;
  flex: none;
  display: flex;
  align-items: center;
  justify-content: center;
  border-radius: 3px;
  border: ${(p) => (p.$on ? "0 none" : "1px solid #c8c8c8")};
  background: ${(p) => (p.$on ? "#1a6df2" : "#fff")};
`;

const Radio = styled.span<{ $on?: boolean }>`
  width: 14px;
  height: 14px;
  flex: none;
  border-radius: 50%;
  border: ${(p) => (p.$on ? "4px solid #1a6df2" : "1px solid #c8c8c8")};
  background: #fff;
`;

const TargetBox = styled.div`
  width: 517px;
  height: 172px;
  margin-left: -4px;
  padding-left: 9px;
  box-shadow: inset 0 0 0 1px #dfdfdf;
`;

const TargetRow = styled.div`
  height: 20px;
  display: flex;
  align-items: center;
  white-space: nowrap;
`;

const TargetIcon = styled.span`
  width: 14px;
  margin: 0 7px;
  display: flex;
  justify-content: center;
  flex: none;
`;

const Footer = styled.div`
  flex: 1;
  display: flex;
  align-items: center;
  gap: 7px;
  padding: 0 19px 2px;
`;

const FooterSpacer = styled.div`
  flex: 1;
`;

const PushButton = styled.div<{ $width: number }>`
  ${raised}
  width: ${(p) => p.$width}px;
  height: 21px;
  text-align: center;
  line-height: 21px;
`;

const AddFrame = styled.div`
  width: 80px;
  height: 28px;
  margin: 0 -3px;
  padding: 1px;
  border: 3px solid #cc001f;
  border-radius: 2px;
  background: #fff;
`;

const AddButton = styled.div`
  height: 20px;
  border-radius: 3px;
  text-align: center;
  line-height: 20px;
  color: #fff;
  background: linear-gradient(#2a7dfb, #0d5ff0);
`;

const RedBox = styled.div`
  position: absolute;
  left: 7px;
  top: 89px;
  width: 230px;
  height: 176px;
  border: 3px solid #cc001f;
  border-radius: 1px;
`;
